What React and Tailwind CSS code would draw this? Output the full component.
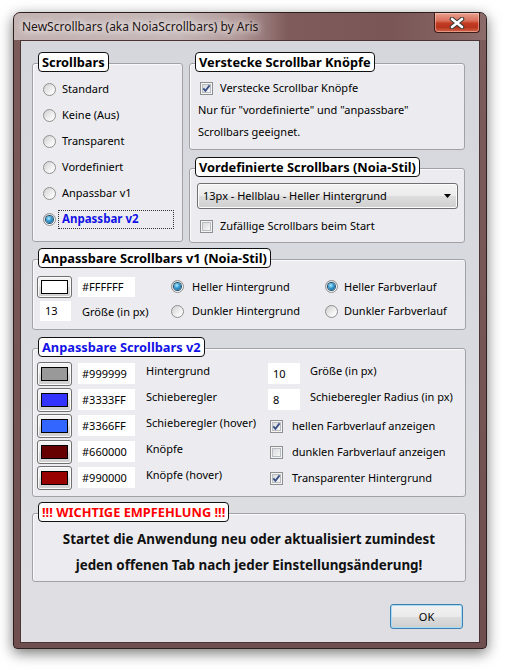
import React from "react";

const TXT = "font-['Noto_Sans',sans-serif] text-[11px] leading-[16px] text-black";

function Radio({ checked }) {
  return (
    <span className="w-[13px] h-[13px] shrink-0 rounded-full border border-[#8f8f8f] bg-[linear-gradient(135deg,#cfcfcf,#f4f4f4_65%,#ffffff)] flex items-center justify-center">
      {checked && (
        <span className="w-[7px] h-[7px] rounded-full bg-[radial-gradient(circle_at_40%_35%,#b4ecff_0%,#3398cf_45%,#0b4d7a_100%)] shadow-[0_0_0_1px_#24506f]" />
      )}
    </span>
  );
}

function Check({ checked }) {
  return (
    <span className="relative w-[13px] h-[13px] shrink-0 border border-[#8e8f8f] bg-[#f4f4f4] p-[1px] flex">
      <span className="flex-1 border border-[#b9bdc2] bg-[linear-gradient(135deg,#d9dadc,#f6f6f6)]" />
      {checked && (
        <svg className="absolute inset-0" width="11" height="11" viewBox="0 0 11 11">
          <path d="M2.3 5.4 L4.4 7.8 L8.6 2.4" fill="none" stroke="#3a4f86" strokeWidth="1.8" />
        </svg>
      )}
    </span>
  );
}

function GroupBox({ label, labelColor = "text-black", className, children }) {
  return (
    <div className={`relative rounded-[3px] border border-[#a2a2a6] bg-[#ececf0] shadow-[inset_1px_1px_0_#fafafa] ${className}`}>
      <div className={`absolute -top-[12px] left-[5px] h-[20px] px-[3px] rounded-[4px] border border-[#111] bg-white flex items-center font-['Noto_Sans',sans-serif] text-[12.8px] font-bold leading-[18px] ${labelColor}`}>
        {label}
      </div>
      {children}
    </div>
  );
}

function ColorButton({ swatch, h }) {
  return (
    <div className={`w-[35px] ${h} rounded-[3px] border border-[#707070] bg-[linear-gradient(#f4f4f4,#ebebeb_50%,#dcdcdc_50%,#cfcfcf)] shadow-[inset_0_0_0_1px_#fbfbfb] flex items-center justify-center`}>
      <span className={`w-[27px] h-[14px] border border-black ${swatch}`} />
    </div>
  );
}

function TextBox({ value, className }) {
  return <div className={`bg-white flex items-center ${TXT} ${className}`}>{value}</div>;
}

const SCROLLBAR_MODES = ["Standard", "Keine (Aus)", "Transparent", "Vordefiniert", "Anpassbar v1"];

const V2_ROWS = [
  { swatch: "bg-[#999999]", hex: "#999999", label: "Hintergrund" },
  { swatch: "bg-[#3333ff]", hex: "#3333FF", label: "Schieberegler" },
  { swatch: "bg-[#3366ff]", hex: "#3366FF", label: "Schieberegler (hover)" },
  { swatch: "bg-[#660000]", hex: "#660000", label: "Knöpfe" },
  { swatch: "bg-[#990000]", hex: "#990000", label: "Knöpfe (hover)" },
];

function V2Right({ index }) {
  if (index === 0 || index === 1) {
    return (
      <div className="flex items-start">
        <TextBox value={index === 0 ? "10" : "8"} className="w-[32px] h-[21px] mt-[1px] pl-[5px]" />
        <span className={`ml-[10px] mt-[1px] ${TXT}`}>{index === 0 ? "Größe (in px)" : "Schieberegler Radius (in px)"}</span>
      </div>
    );
  }
  const items = {
    2: { text: "hellen Farbverlauf anzeigen", checked: true },
    3: { text: "dunklen Farbverlauf anzeigen", checked: false },
    4: { text: "Transparenter Hintergrund", checked: true },
  }[index];
  return (
    <div className="flex items-center h-full -mt-[1px] pl-[2px] gap-[9px]">
      <Check checked={items.checked} />
      <span className={TXT}>{items.text}</span>
    </div>
  );
}

export default function App() {
  return (
    <div className="w-[505px] h-[670px] bg-white overflow-hidden pt-[12px] pl-[13px]">
      <div className="w-[474px] h-[637px] rounded-t-[7px] rounded-b-[4px] border border-[#2e1f1f] bg-[linear-gradient(180deg,#7d5c5c,#6e4e4e)] shadow-[0_4px_14px_rgba(0,0,0,0.55)] flex flex-col">
        {/* title bar */}
        <div className="relative h-[27px] shrink-0 rounded-t-[6px] bg-[linear-gradient(90deg,#c4b3b3_0%,#c6b7b7_35%,#b09797_48%,#7f5b5b_58%,#7a5656_80%,#8c6b6b_100%)] flex items-center pl-[8px]">
          <span className="font-['Noto_Sans',sans-serif] text-[12px] text-[#1c1414] [text-shadow:0_0_6px_#fff,0_0_10px_#fff]">
            NewScrollbars (aka NoiaScrollbars) by Aris
          </span>
          <div className="absolute top-0 right-[6px] w-[46px] h-[20px] rounded-b-[4px] border border-t-0 border-[#3d1c16] bg-[linear-gradient(180deg,#e9a291_0%,#d9705a_40%,#c23a22_55%,#b8331c_75%,#d1674a_100%)] shadow-[inset_0_0_0_1px_rgba(255,220,210,0.45)] flex items-center justify-center">
            <svg width="16" height="12" viewBox="0 0 16 12">
              <path d="M3 2 L13 10 M13 2 L3 10" stroke="#3a3a3a" strokeWidth="4.6" strokeLinecap="round" />
              <path d="M3 2 L13 10 M13 2 L3 10" stroke="#ffffff" strokeWidth="2.6" strokeLinecap="round" />
            </svg>
          </div>
        </div>

        {/* client area */}
        <div className="flex-1 mx-[6px] mb-[5px] border border-[#4a3434] bg-[linear-gradient(180deg,#d6d7dd_0%,#dadbe0_60%,#dfdfe3_100%)] pt-[22px] pl-[11px] flex flex-col">
          {/* row 1 */}
          <div className="flex items-start gap-[6px]">
            <GroupBox label="Scrollbars" className="w-[151px] h-[179px] pt-[12px] pl-[10px]">
              {SCROLLBAR_MODES.map((m) => (
                <div key={m} className="h-[26px] flex items-center gap-[6px]">
                  <Radio />
                  <span className={TXT}>{m}</span>
                </div>
              ))}
              <div className="h-[26px] flex items-center">
                <Radio checked />
                <span className="ml-[2px] w-[116px] h-[19px] border border-dotted border-[#333] px-[3px] flex items-center font-['Noto_Sans',sans-serif] text-[11.5px] font-bold text-[#1212e6]">
                  Anpassbar v2
                </span>
              </div>
            </GroupBox>

            <div className="flex flex-col gap-[18px]">
              <GroupBox label="Verstecke Scrollbar Knöpfe" className="w-[276px] h-[87px] pt-[13px]">
                <div className="h-[22px] flex items-center gap-[7px] pl-[10px]">
                  <Check checked />
                  <span className={TXT}>Verstecke Scrollbar Knöpfe</span>
                </div>
                <div className={`h-[22px] flex items-center pl-[8px] ${TXT}`}>Nur für "vordefinierte" und "anpassbare"</div>
                <div className={`h-[22px] flex items-center pl-[8px] ${TXT}`}>Scrollbars geeignet.</div>
              </GroupBox>

              <GroupBox label="Vordefinierte Scrollbars (Noia-Stil)" className="w-[276px] h-[75px] pt-[14px]">
                <div className="ml-[7px] w-[261px] h-[26px] rounded-[3px] border border-[#707070] bg-[linear-gradient(#f3f3f3,#ebebeb_50%,#dddddd_50%,#cfcfcf)] shadow-[inset_0_0_0_1px_#fcfcfc] flex items-center justify-between pl-[5px] pr-[5px]">
                  <span className={TXT}>13px - Hellblau - Heller Hintergrund</span>
                  <svg width="8" height="5" viewBox="0 0 8 5">
                    <path d="M0 0 H7 L3.5 4 Z" fill="#000" />
                  </svg>
                </div>
                <div className="mt-[6px] h-[22px] flex items-center gap-[7px] pl-[10px]">
                  <Check />
                  <span className={TXT}>Zufällige Scrollbars beim Start</span>
                </div>
              </GroupBox>
            </div>
          </div>

          {/* v1 */}
          <GroupBox label="Anpassbare Scrollbars v1 (Noia-Stil)" className="mt-[16px] w-[434px] h-[71px] pt-[15px] pl-[4px]">
            <div className="h-[23px] flex items-center">
              <div className="w-[41px]">
                <ColorButton swatch="bg-white" h="h-[22px]" />
              </div>
              <div className="w-[93px]">
                <TextBox value="#FFFFFF" className="w-[57px] h-[20px] pl-[4px]" />
              </div>
              <div className="w-[154px] flex items-center gap-[8px]">
                <Radio checked />
                <span className={TXT}>Heller Hintergrund</span>
              </div>
              <div className="flex items-center gap-[6px]">
                <Radio checked />
                <span className={TXT}>Heller Farbverlauf</span>
              </div>
            </div>
            <div className="h-[24px] mt-[1px] flex items-center">
              <div className="w-[41px] pl-[3px]">
                <TextBox value="13" className="w-[31px] h-[20px] pl-[5px]" />
              </div>
              <div className="w-[93px] pl-[4px] -mt-[3px]">
                <span className={TXT}>Größe (in px)</span>
              </div>
              <div className="w-[154px] flex items-center gap-[8px]">
                <Radio />
                <span className={TXT}>Dunkler Hintergrund</span>
              </div>
              <div className="flex items-center gap-[6px]">
                <Radio />
                <span className={TXT}>Dunkler Farbverlauf</span>
              </div>
            </div>
          </GroupBox>

          {/* v2 */}
          <GroupBox label="Anpassbare Scrollbars v2" labelColor="text-[#1212e6]" className="mt-[18px] w-[434px] h-[149px] pt-[13px] pl-[4px]">
            {V2_ROWS.map((r, i) => (
              <div key={r.hex} className="h-[26px] flex items-start">
                <div className="w-[41px]">
                  <ColorButton swatch={r.swatch} h="h-[24px]" />
                </div>
                <div className="w-[68px] pt-[1px]">
                  <TextBox value={r.hex} className="w-[57px] h-[21px] pl-[4px]" />
                </div>
                <div className={`w-[122px] pt-[1px] ${TXT}`}>{r.label}</div>
                <div className="flex-1 h-full">
                  <V2Right index={i} />
                </div>
              </div>
            ))}
          </GroupBox>

          {/* warning */}
          <GroupBox label="!!! WICHTIGE EMPFEHLUNG !!!" labelColor="text-[#ff0000]" className="mt-[16px] w-[434px] h-[69px] pt-[12px]">
            <p className="text-center font-['Noto_Sans',sans-serif] text-[13.4px] font-bold leading-[26px] text-[#111]">
              Startet die Anwendung neu oder aktualisiert zumindest
              <br />
              jeden offenen Tab nach jeder Einstellungsänderung!
            </p>
          </GroupBox>

          <div className="mt-[22px] w-[431px] flex justify-end">
            <button className={`w-[73px] h-[25px] rounded-[3px] border border-[#3c7fb1] bg-[linear-gradient(#f2f2f2,#ebebeb_50%,#dddddd_50%,#cfcfcf)] shadow-[inset_0_0_0_1px_#a8dcf5] ${TXT}`}>
              OK
            </button>
          </div>
        </div>
      </div>
    </div>
  );
}
